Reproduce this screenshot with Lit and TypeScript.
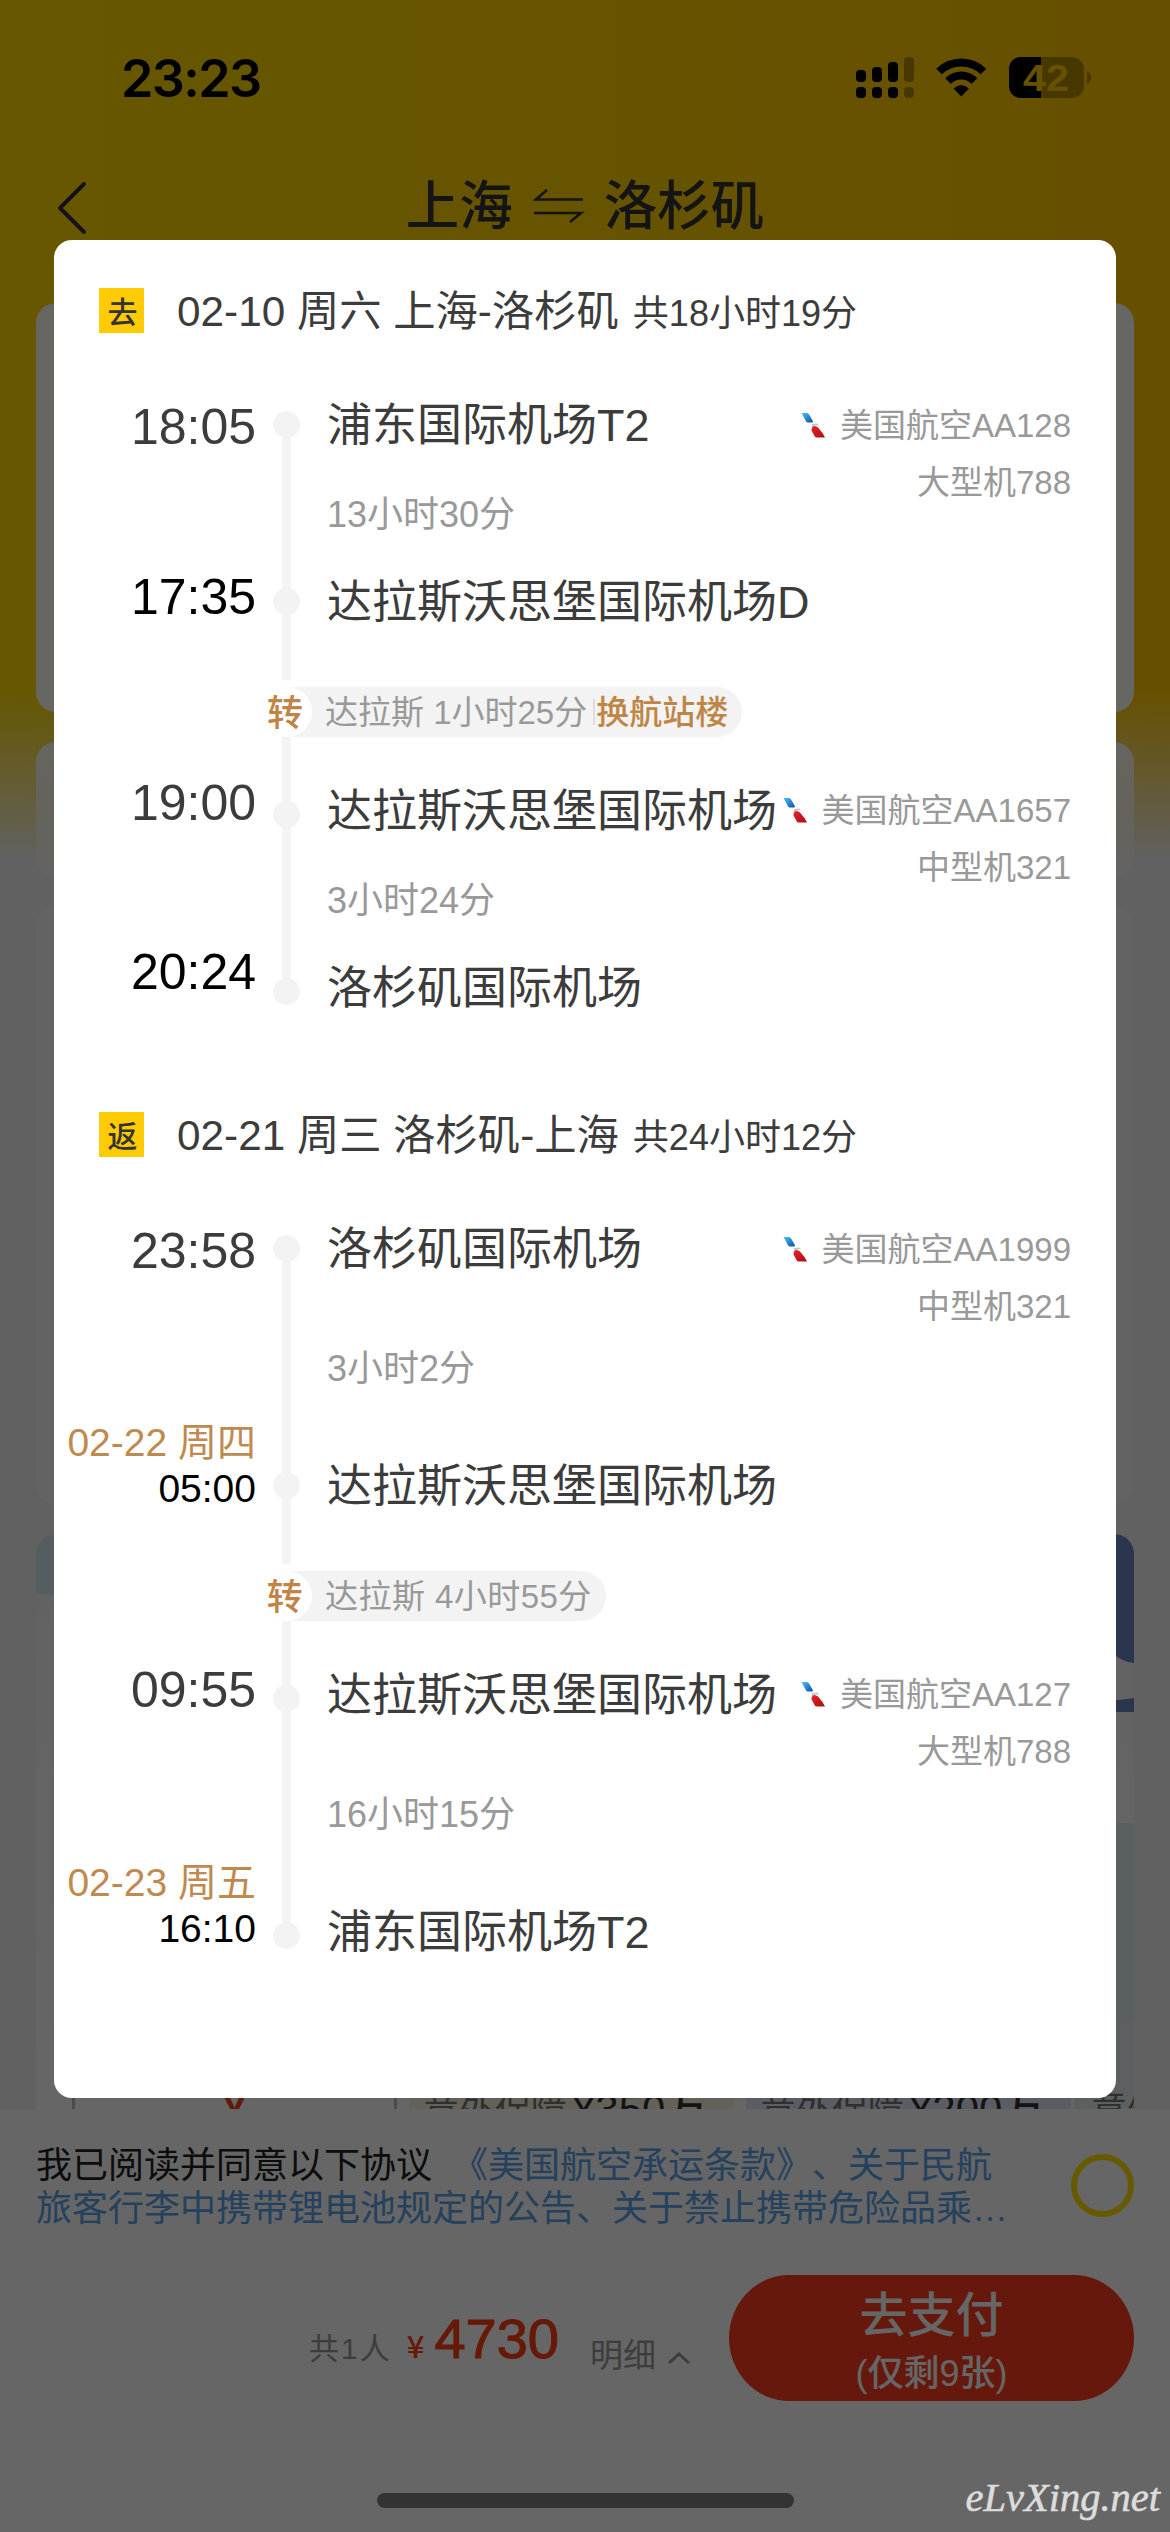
import { LitElement, html, css, svg, nothing } from "lit";
import { customElement, property } from "lit/decorators.js";

interface Stop {
  time: string;
  name: string;
  date?: string;
}
interface Leg {
  kind: string;
  from: Stop;
  to: Stop;
  duration: string;
  flight: string;
  plane: string;
}
interface Journey {
  badge: string;
  title: string;
  total: string;
  legs: Leg[];
  transfer: { text: string; note?: string };
}

const JOURNEYS: Journey[] = [
  {
    badge: "去",
    title: "02-10 周六 上海-洛杉矶",
    total: "共18小时19分",
    transfer: { text: "达拉斯 1小时25分", note: "换航站楼" },
    legs: [
      {
        kind: "first",
        from: { time: "18:05", name: "浦东国际机场T2" },
        to: { time: "17:35", name: "达拉斯沃思堡国际机场D" },
        duration: "13小时30分",
        flight: "美国航空AA128",
        plane: "大型机788",
      },
      {
        kind: "second",
        from: { time: "19:00", name: "达拉斯沃思堡国际机场" },
        to: { time: "20:24", name: "洛杉矶国际机场" },
        duration: "3小时24分",
        flight: "美国航空AA1657",
        plane: "中型机321",
      },
    ],
  },
  {
    badge: "返",
    title: "02-21 周三 洛杉矶-上海",
    total: "共24小时12分",
    transfer: { text: "达拉斯 4小时55分" },
    legs: [
      {
        kind: "first long",
        from: { time: "23:58", name: "洛杉矶国际机场" },
        to: { time: "05:00", name: "达拉斯沃思堡国际机场", date: "02-22 周四" },
        duration: "3小时2分",
        flight: "美国航空AA1999",
        plane: "中型机321",
      },
      {
        kind: "second long",
        from: { time: "09:55", name: "达拉斯沃思堡国际机场" },
        to: { time: "16:10", name: "浦东国际机场T2", date: "02-23 周五" },
        duration: "16小时15分",
        flight: "美国航空AA127",
        plane: "大型机788",
      },
    ],
  },
];

@customElement("journey-section")
export class JourneySection extends LitElement {
  @property({ attribute: false }) journey!: Journey;

  static styles = css`
    :host { display: block; white-space: nowrap; }
    .head {
      display: flex; align-items: center; height: 45px;
      color: #3c3c3c;
    }
    .badge {
      width: 45px; height: 45px; line-height: 49px; margin-right: 33px; text-indent: 2px;
      background: #ffcb05; color: #333; font-size: 30px; text-align: center; font-weight: 500;
    }
    .title { font-size: 42.300px; line-height: 45px; }
    .total { font-size: 36px; line-height: 45px; margin-left: 14px; }
    .heading { padding-top: 3px; }
    .body { padding-top: 78px; }
    .leg {
      display: grid; grid-template-columns: 202px 27px minmax(0, 1fr);
      column-gap: 17px; height: 204px; margin-left: -45px;
    }
    .leg.long { height: 264px; }
    .times, .rail, .info, .meta {
      display: flex; flex-direction: column; justify-content: space-between;
    }
    .times { align-items: flex-end; font-size: 50px; color: #3c3c3c; }
    .times > div { line-height: 27px; }
    .times .arr { color: #000; }
    .first .times { padding-top: 3px; margin-bottom: 4px; }
    .second .times { margin-top: -11px; margin-bottom: 19px; }
    .long .times { margin-bottom: -3px; }
    .second.long .times { margin-bottom: 7px; margin-top: -8px; }
    .times .date { font-size: 39px; color: #bf8a50; line-height: 46px; margin-bottom: 9px; }
    .dated { font-size: 39px; text-align: right; }
    .dot { width: 27px; height: 27px; border-radius: 50%; background: #f3f3f3; }
    .rail { background: linear-gradient(#f4f4f4, #f4f4f4) center / 9px 100% no-repeat; }
    .first .rail { background-position: center 14px; }
    .second .rail { background-size: 9px calc(100% - 13px); background-position: center 0; }
    .info {
      flex-direction: row; margin-left: 10px; line-height: 27px;
    }
    .first .info { margin-top: 1px; margin-bottom: -1px; }
    .second .info { margin-top: -3px; margin-bottom: 3px; }
    .stops { display: flex; flex-direction: column; justify-content: space-between; flex: 1 1 0; min-width: 0; }
    .name { font-size: 45px; color: #3c3c3c; }
    .duration { font-size: 36px; color: #999; padding-top: 1px; }
    .meta {
      flex: none; justify-content: flex-start; gap: 30px; align-items: flex-end;
      font-size: 33px; color: #999;
    }
    .second .meta { margin-top: -1px; }
    .carrier { display: flex; align-items: center; }
    .logo { width: 27px; height: 25px; margin-right: 12px; }
    .link {
      width: 9px; height: 65px; margin-left: 183px; background: #f4f4f4;
    }
    .link.after { height: 64px; }
    .transfer { display: flex; margin-left: 163px; padding-top: 7px; height: 50px; }
    .pill {
      display: flex; align-items: center; height: 50px; border-radius: 25px;
      background: #f3f3f3; font-size: 33px; line-height: 53px; color: #999;
      padding-right: 14px;
    }
    .pill.bare { letter-spacing: 0.450px; }
    .mark {
      width: 50px; height: 50px; border-radius: 50%; background: #fff;
      margin-right: 13px; text-align: center; font-size: 36px;
      color: #bf8547; font-weight: 500; text-indent: -4px;
    }
    .note {
      color: #bf8547; font-weight: 500; margin-left: 6px; padding-left: 3px;
      background: linear-gradient(#ddd, #ddd) left center / 2px 26px no-repeat;
    }
  `;

  private stop(s: Stop, cls: string) {
    return s.date
      ? html`<div class="arr dated"><div class="date">${s.date}</div>${s.time}</div>`
      : html`<div class=${cls}>${s.time}</div>`;
  }

  private leg(l: Leg) {
    return html`<div class="leg ${l.kind}">
      <div class="times">${this.stop(l.from, "dep")}${this.stop(l.to, "arr")}</div>
      <div class="rail"><div class="dot"></div><div class="dot"></div></div>
      <div class="info">
        <div class="stops">
          <div class="name">${l.from.name}</div>
          <div class="duration">${l.duration}</div>
          <div class="name">${l.to.name}</div>
        </div>
        <div class="meta">
          <div class="carrier">
            <svg class="logo" viewBox="0 0 27 25">
              <defs>
                <linearGradient id="b" x1="0" y1="0" x2="1" y2="1">
                  <stop offset="0" stop-color="#4cc4f4" /><stop offset="1" stop-color="#0a4da8" />
                </linearGradient>
                <linearGradient id="r" x1="0" y1="0" x2="1" y2="1">
                  <stop offset="0" stop-color="#e8242a" /><stop offset="1" stop-color="#a80f12" />
                </linearGradient>
              </defs>
              <path fill="url(#b)" d="M0.500 0H6Q8 0.500 9 3L12 8.500Q12.500 9.500 10.500 9.500H6.500Q5 9 4 6.500Z" />
              <path fill="#c3c8cc" d="M11 11L16.500 10.500 18 12.500H14Q11.500 13.500 10.500 15Z" />
              <path fill="url(#r)" d="M12 13.500Q14 12 17 14.500L21.500 20 24 24.500H15.500Q14 24.500 13 22L10.500 17.500Q10.200 15 12 13.500Z" />
            </svg>
            ${l.flight}
          </div>
          <div>${l.plane}</div>
        </div>
      </div>
    </div>`;
  }

  render() {
    const j = this.journey;
    return html`
      <div class="head">
        <div class="badge">${j.badge}</div>
        <div class="heading"><span class="title">${j.title}</span><span class="total">${j.total}</span></div>
      </div>
      <div class="body">
        ${this.leg(j.legs[0])}
        <div class="link"></div>
        <div class="transfer">
          <div class="pill ${j.transfer.note ? "" : "bare"}">
            <div class="mark">转</div>
            ${j.transfer.text}
            ${j.transfer.note ? html`<span class="note">${j.transfer.note}</span>` : nothing}
          </div>
        </div>
        <div class="link after"></div>
        ${this.leg(j.legs[1])}
      </div>
    `;
  }
}

@customElement("app-root")
export class AppRoot extends LitElement {
  static styles = css`
    :host {
      display: block; position: relative; width: 1170px; height: 2532px;
      overflow: hidden; background: #f3f3f3; white-space: nowrap;
      font-family: "Liberation Sans", "Noto Sans CJK SC", sans-serif;
    }
    .page {
      display: flex; flex-direction: column; height: 2532px; box-sizing: border-box;
      background:
        linear-gradient(rgba(243, 243, 243, 0) 690px, rgba(243, 243, 243, 0.450) 770px, #f3f3f3 862px),
        linear-gradient(90deg, #ffda00, #ffc800);
    }
    .status {
      display: flex; align-items: center; justify-content: space-between;
      height: 156px; padding: 0 78px 0 121px; box-sizing: border-box; flex: none;
    }
    .clock { font: 600 52px/60px Inter, "Liberation Sans", sans-serif; letter-spacing: -1.600px; padding-top: 1px; }
    .icons { width: 236px; height: 42px; }
    .batt { font: 700 37px "Liberation Sans", sans-serif; }
    .nav {
      display: grid; grid-template-columns: 1fr auto 1fr; align-items: center;
      height: 98px; flex: none; padding: 0 56px; color: #333;
    }
    .route { display: flex; align-items: center; font-size: 53.500px; font-weight: 500; line-height: 98px; padding-top: 2px; }
    .swap { width: 52px; height: 34px; margin: -2px 19px 0 20px; }
    .back { width: 32px; height: 54px; margin-top: 3px; }
    .cards { display: flex; flex-direction: column; flex: none; height: 1855px; padding: 49px 36px 0; box-sizing: border-box; overflow: hidden; }
    .card { background: #fff; border-radius: 20px; flex: none; }
    .c1 { height: 409px; opacity: 0.970; }
    .c2 { height: 135px; margin-top: 30px; background: linear-gradient(rgba(255,255,255,.92), rgba(252,249,240,.6)); }
    .c3 { height: 597px; margin-top: 30px; background: #f8f8f8; }
    .c4 {
      height: 600px; margin-top: 30px; overflow: hidden; display: flex; flex-direction: column;
      background: linear-gradient(#f5f5f5, #fff);
    }
    .banner { display: flex; justify-content: space-between; height: 289px; flex: none; }
    .sky { width: 200px; height: 60px; background: #d2eaf2; }
    .wave { width: 60px; height: 178px; }
    .tint { align-self: flex-end; width: 60px; height: 287px; background: #e2f0f0; flex: none; }
    .offers { display: flex; flex: none; gap: 12px; height: 90px; margin: -90px 0 0 36px; line-height: 60px; font-size: 36px; color: #777; }
    .offer { width: 325px; height: 90px; flex: none; box-sizing: border-box; padding: 60px 14px 0; }
    .offer b { font-size: 42px; color: #333; font-weight: 500; margin-left: 5px; }
    .plain { border: 3px solid #bbb; border-width: 0 3px; color: #f5400f; text-align: center; font-weight: 700; font-size: 40px; }
    .warm { background: #fbf2dd; }
    .cool { background: #e4e8fb; }
    .mint { background: #e6f0f0; padding-left: 8px; }
    .bottom { background: #fff; flex: 1; padding: 35px 36px 0; display: flex; flex-direction: column; }
    .terms { display: flex; justify-content: space-between; font-size: 36px; line-height: 43px; color: #222; height: 86px; text-spacing-trim: space-all; }
    .terms a { color: #5aa2ea; }
    .gap { margin-left: 20px; }
    .radio { width: 63px; height: 63px; box-sizing: border-box; border: 6px solid #ffdf00; border-radius: 50%; margin-top: 10px; }
    .pay { display: flex; align-items: flex-end; justify-content: flex-end; height: 126px; margin-top: 45px; }
    .people { font-size: 30px; line-height: 40px; color: #999; letter-spacing: 2px; margin-bottom: 32px; }
    .price { display: flex; align-items: baseline; color: #ff4012; font-weight: 500; margin: 0 31px 30px 15px; }
    .yen { font-size: 31px; margin-right: 10px; font-family: "Noto Sans CJK SC", sans-serif; line-height: 40px; }
    .num { font-size: 56px; line-height: 64px; -webkit-text-stroke: 1.100px #ff4012; }
    .detail { display: flex; align-items: center; font-size: 33px; line-height: 40px; color: #999; margin-bottom: 25px; }
    .caret { width: 22px; height: 12px; margin: 4px 39px 0 12px; }
    .btn {
      width: 405px; height: 126px; border-radius: 60px / 63px; background: #ff3d1e; color: #fff;
      display: flex; flex-direction: column; align-items: center; font-size: 48px; font-weight: 500; line-height: 81px;
    }
    .btn small { font-size: 36px; line-height: 44px; margin-top: -4px; }
    .veil {
      position: absolute; inset: 0; background: rgba(0, 0, 0, 0.6);
      padding: 240px 54px 0;
    }
    .modal {
      height: 1858px; box-sizing: border-box; background: #fff; border-radius: 18px;
      padding: 48px 45px 0 45px;
    }
    .modal journey-section + journey-section { margin-top: 107px; }
    .home { position: absolute; left: 377px; top: 2493px; width: 417px; height: 15px; border-radius: 8px; background: #333; }
    .stamp {
      position: absolute; right: 10px; top: 2470px; color: #dcdcdc;
      font: italic 400 40.500px/56px "Liberation Serif", serif; -webkit-text-stroke: 0.600px #dcdcdc;
    }
  `;

  private icons() {
    const bars = [
      [0, 13, 12, 1], [16, 10, 15, 1], [32, 5, 20, 1], [48, 0, 25, 0.3],
    ];
    return html`<svg class="icons" viewBox="0 0 236 42">
      ${bars.map(([x, y, h, o]) => svg`<g opacity=${o}>
        <rect x=${x} y=${y} width="10" height=${h} rx="4" /><rect x=${x} y="30" width="10" height="11" rx="4" /></g>`)}
      <g fill="none" stroke="#000">
        <path stroke-width="8" d="M83 14.500A32 32 0 0 1 127.500 14.500" />
        <path stroke-width="8" d="M92 24A18.500 18.500 0 0 1 118.500 24" />
      </g>
      <path d="M97.500 31.500Q105.300 24.500 113 31.500L105.300 39.500Z" />
      <defs><clipPath id="lv"><rect x="153" y="0" width="32" height="42" /></clipPath></defs>
      <rect x="153" width="75" height="41" rx="12" opacity=".3" />
      <rect x="153" width="75" height="41" rx="12" clip-path="url(#lv)" />
      <path opacity=".3" d="M231 14Q235 16 235 20.500T231 27Z" />
      <text class="batt" x="167" y="34" textLength="46" lengthAdjust="spacingAndGlyphs" fill="#ffca00">42</text>
    </svg>`;
  }

  render() {
    return html`
      <div class="page">
        <div class="status"><div class="clock">23:23</div>${this.icons()}</div>
        <div class="nav">
          <svg class="back" viewBox="0 0 32 54" fill="none" stroke="#333" stroke-width="4" stroke-linecap="round" stroke-linejoin="round"><path d="M28 3L4 27 28 51" /></svg>
          <div class="route">
            上海
            <svg class="swap" viewBox="0 0 52 34" fill="none" stroke="#333" stroke-width="2.600"><path d="M14 1L3 10.500H50M1 24H48L37 33" /></svg>
            洛杉矶
          </div>
        </div>
        <div class="cards">
          <div class="card c1"></div>
          <div class="card c2"></div>
          <div class="card c3"></div>
          <div class="card c4">
            <div class="banner">
              <div class="sky"></div>
              <svg class="wave" viewBox="0 0 60 178"><path fill="#6b84c2" d="M0 0H60V129Q50 128 42 122Q20 112 0 80ZM30 167Q48 166 60 164V178H30Z" /></svg>
            </div>
            <div class="tint"></div>
            <div class="offers">
              <div class="offer plain">¥</div>
              <div class="offer warm">意外保障<b>¥350万</b></div>
              <div class="offer cool">意外保障<b>¥200万</b></div>
              <div class="offer mint">意外</div>
            </div>
          </div>
        </div>
        <div class="bottom">
          <div class="terms">
            <div>我已阅读并同意以下协议<a class="gap">《美国航空承运条款》、关于民航</a><br /><a>旅客行李中携带锂电池规定的公告、关于禁止携带危险品乘…</a></div>
            <div class="radio"></div>
          </div>
          <div class="pay">
            <div class="people">共1人</div>
            <div class="price"><span class="yen">¥</span><span class="num">4730</span></div>
            <div class="detail">明细
              <svg class="caret" viewBox="0 0 22 12" fill="none" stroke="#999" stroke-width="3"><path d="M1 11L11 2 21 11" /></svg>
            </div>
            <div class="btn">去支付<small>(仅剩9张)</small></div>
          </div>
        </div>
      </div>
      <div class="veil">
        <div class="modal">
          ${JOURNEYS.map((j) => html`<journey-section .journey=${j}></journey-section>`)}
        </div>
      </div>
      <div class="home"></div>
      <div class="stamp">eLvXing.net</div>
    `;
  }
}
